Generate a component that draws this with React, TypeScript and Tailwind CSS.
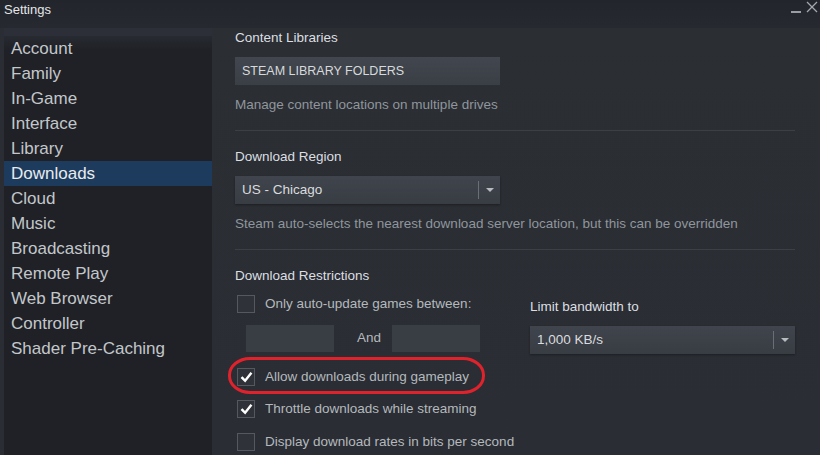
import type { ReactNode } from "react";

const navItems = [
  "Account",
  "Family",
  "In-Game",
  "Interface",
  "Library",
  "Downloads",
  "Cloud",
  "Music",
  "Broadcasting",
  "Remote Play",
  "Web Browser",
  "Controller",
  "Shader Pre-Caching",
];

const CheckIcon = () => (
  <svg width="13" height="13" viewBox="0 0 14 14" fill="none" stroke="#ffffff" strokeWidth="2.6" strokeLinecap="square">
    <polyline points="2.5 7.5 5.5 10.5 11.5 3" />
  </svg>
);

function Checkbox({ checked, label }: { checked?: boolean; label: string }) {
  return (
    <div className="flex h-[18px] items-center">
      <div className="ml-[2px] flex h-[18px] w-[18px] items-center justify-center border border-[#55595f] bg-[#2f3238]">
        {checked && <CheckIcon />}
      </div>
      <span className="ml-[10px] text-[13.5px] leading-[18px] text-[#b4b9be]">{label}</span>
    </div>
  );
}

function Dropdown({ value }: { value: string }) {
  return (
    <div className="flex h-[28px] w-[265px] items-center bg-gradient-to-b from-[#40444c] to-[#383c43] shadow-[0_1px_2px_rgba(0,0,0,0.35)]">
      <span className="flex-1 pl-[7px] text-[13.5px] text-[#d9dcdf]">{value}</span>
      <div className="h-[18px] w-px bg-[#6a6e75]" />
      <div className="flex w-[21px] justify-center">
        <div className="h-0 w-0 border-x-[4px] border-t-[4px] border-x-transparent border-t-[#b8bcc0]" />
      </div>
    </div>
  );
}

function Label({ children, className = "" }: { children: ReactNode; className?: string }) {
  return <div className={`h-[18px] text-[13.5px] leading-[18px] text-[#dcdfe2] ${className}`}>{children}</div>;
}

function Desc({ children, className = "" }: { children: ReactNode; className?: string }) {
  return <div className={`h-[18px] text-[13.5px] leading-[18px] text-[#8f969d] ${className}`}>{children}</div>;
}

export default function App() {
  return (
    <div
      className="flex h-[455px] w-[820px] flex-col overflow-hidden bg-[#2a2d33]"
      style={{ fontFamily: '"Liberation Sans", Arial, sans-serif' }}
    >
      {/* title bar */}
      <div className="relative flex h-[28px] shrink-0 items-start bg-gradient-to-b from-[#22252c] to-[#262a30]">
        <span className="ml-[4px] mt-[1px] text-[13px] leading-[18px] text-[#e4e6e8]">Settings</span>
        <div className="ml-auto mr-[2px] flex items-start gap-[5px]">
          <div className="mt-[11px] h-[1.5px] w-[10px] bg-[#9a9ea4]" />
          <svg width="12" height="12" viewBox="0 0 12 12" stroke="#a4a8ad" strokeWidth="1.3" className="mt-[1px]">
            <line x1="1" y1="1" x2="11" y2="11" />
            <line x1="11" y1="1" x2="1" y2="11" />
          </svg>
        </div>
      </div>

      <div className="flex flex-1">
        {/* sidebar */}
        <div className="ml-[4px] flex w-[208px] flex-col bg-[#1f2126]">
          <div className="h-[8px] bg-[#2c2f37]" />
          <div className="flex flex-col bg-[linear-gradient(to_bottom,#272a31_0px,#1f2126_14px)]">
            {navItems.map((item) => (
              <div
                key={item}
                className={`h-[25px] pl-[7px] text-[17px] leading-[25px] ${
                  item === "Downloads" ? "bg-[#1d3b5d] text-[#e8ebee]" : "text-[#c3c7cb]"
                }`}
              >
                {item}
              </div>
            ))}
          </div>
        </div>

        {/* content */}
        <div className="flex flex-1 flex-col bg-gradient-to-b from-[#2b2e33] to-[#2a2d33] pl-[23px] pr-[25px] pt-[1px]">
          <Label>Content Libraries</Label>
          <div className="mt-[10px] flex h-[28px] w-[265px] items-center bg-gradient-to-b from-[#42464e] to-[#3a3e45] pl-[7px] text-[12.5px] text-[#d7dadd]">
            STEAM LIBRARY FOLDERS
          </div>
          <Desc className="mt-[11px]">Manage content locations on multiple drives</Desc>
          <div className="mt-[16px] h-px bg-[#3b3f46]" />

          <Label className="mt-[17px]">Download Region</Label>
          <div className="mt-[10px]">
            <Dropdown value="US - Chicago" />
          </div>
          <Desc className="mt-[11px]">Steam auto-selects the nearest download server location, but this can be overridden</Desc>
          <div className="mt-[16px] h-px bg-[#3b3f46]" />

          <Label className="mt-[17px]">Download Restrictions</Label>
          <div className="flex">
            <div className="flex w-[295px] flex-col">
              <div className="mt-[10px]">
                <Checkbox label="Only auto-update games between:" />
              </div>
              <div className="mt-[12px] flex items-center pl-[11px]">
                <div className="h-[27px] w-[88px] bg-[#393d44]" />
                <span className="w-[58px] pl-[12px] text-center text-[13.5px] text-[#b4b9be]">And</span>
                <div className="h-[27px] w-[88px] bg-[#393d44]" />
              </div>
            </div>
            <div className="flex flex-col">
              <Label className="mt-[13px] text-[#b4b9be]">Limit bandwidth to</Label>
              <div className="mt-[10px]">
                <Dropdown value="1,000 KB/s" />
              </div>
            </div>
          </div>

          <div className="relative mt-[14px]">
            <Checkbox checked label="Allow downloads during gameplay" />
            <div className="pointer-events-none absolute left-[-7px] top-[-11px] h-[37px] w-[257px] rounded-[22px/18px] border-[3px] border-[#e0222c]" />
          </div>
          <div className="mt-[14px]">
            <Checkbox checked label="Throttle downloads while streaming" />
          </div>
          <div className="mt-[15px]">
            <Checkbox label="Display download rates in bits per second" />
          </div>
        </div>
      </div>
    </div>
  );
}
